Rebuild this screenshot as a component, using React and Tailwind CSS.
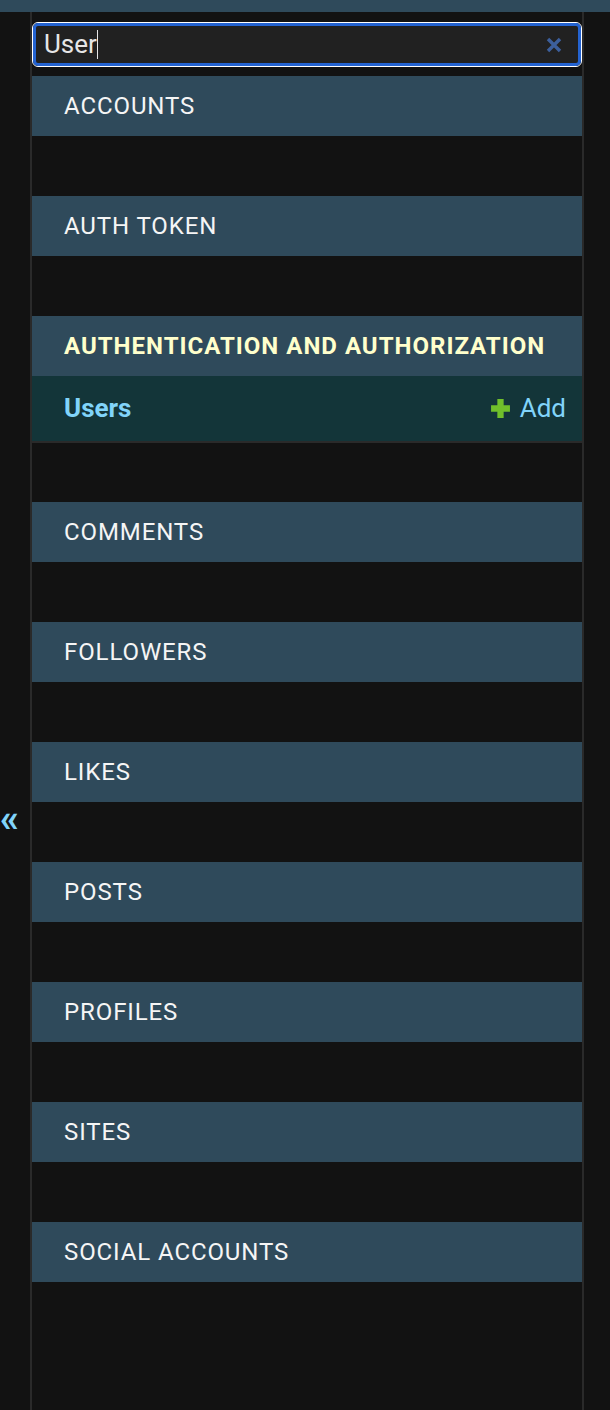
const modules = [
  { name: "Accounts" },
  { name: "Auth token" },
  { name: "Authentication and Authorization", current: true, models: [{ name: "Users" }] },
  { name: "Comments" },
  { name: "Followers" },
  { name: "Likes" },
  { name: "Posts" },
  { name: "Profiles" },
  { name: "Sites" },
  { name: "Social accounts" },
];

const font = { fontFamily: "Roboto, 'Liberation Sans', sans-serif" };

const PlusIcon = () => (
  <svg width="21" height="21" viewBox="0 0 20 20" className="shrink-0">
    <path d="M7 1h6v6h6v6h-6v6H7v-6H1V7h6z" fill="#70bf2b" />
  </svg>
);

const ClearIcon = () => (
  <svg width="18" height="18" viewBox="0 0 18 18">
    <path d="M3 3l12 12M15 3L3 15" stroke="#3c5f9c" strokeWidth="3.4" strokeLinecap="butt" />
  </svg>
);

const Module = ({ module }) => (
  <div className={module.models ? "mb-[59px]" : "mb-[60px]"}>
    <div className="h-[60px] bg-[#2f4a5b] flex items-center px-[32px]">
      <span
        className={
          module.current
            ? "text-[24px] uppercase tracking-[1px] font-bold text-[#ffffcc]"
            : "text-[24px] uppercase tracking-[0.9px] text-[#f5f5f5]"
        }
      >
        {module.name}
      </span>
    </div>
    {module.models &&
      module.models.map(model => (
        <div
          key={model.name}
          className="h-[67px] bg-[#133539] border-b-2 border-[#2a2a2a] flex items-center justify-between pl-[32px] pr-[16px]"
        >
          <span className="text-[26px] font-bold text-[#81d4fa]">{model.name}</span>
          <span className="flex items-center gap-[9px] text-[26px] text-[#81d4fa]">
            <PlusIcon />
            Add
          </span>
        </div>
      ))}
  </div>
);

export default function App() {
  return (
    <div className="min-h-screen bg-[#121212]" style={font}>
      <div className="h-[12px] bg-[#2f4a5b]" />
      <div className="flex min-h-[1398px]">
        <button className="w-[32px] shrink-0 border-r-2 border-[#2a2a2a] flex justify-start">
          <span className="mt-[787px] text-[38px] font-bold leading-none text-[#81d4fa]">«</span>
        </button>
        <nav className="w-[552px] border-r-2 border-[#2a2a2a]">
          <div className="pt-[10px] pb-[9px]">
            <div className="h-[45px] rounded-[6px] border border-white">
              <div className="h-full rounded-[5px] border-[3px] border-[#2463d1] bg-[#212121] flex items-center pl-[8px] pr-[15px]">
                <span className="text-[26px] text-[#e6e6e6]">User</span>
                <span className="w-[1.5px] h-[29px] bg-[#e6e6e6]" />
                <span className="ml-auto flex items-center">
                  <ClearIcon />
                </span>
              </div>
            </div>
          </div>
          {modules.map(m => (
            <Module key={m.name} module={m} />
          ))}
        </nav>
      </div>
    </div>
  );
}
